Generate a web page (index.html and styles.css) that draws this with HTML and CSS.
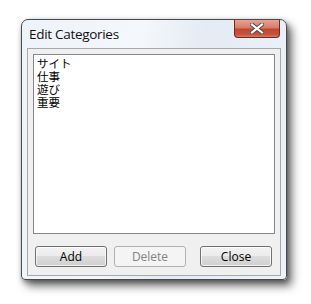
FILE: index.html
```html
<!DOCTYPE html>
<html>
<head>
<meta charset="utf-8">
<link rel="stylesheet" href="styles.css">
</head>
<body>
<div class="window">
  <div class="titlebar">
    <span class="title">Edit Categories</span>
    <div class="close-btn">
      <svg width="14" height="11" viewBox="0 0 14 11">
        <path d="M2 1.5 L12 9.5 M12 1.5 L2 9.5" stroke="#4a4a4a" stroke-width="4" stroke-linecap="square"/>
        <path d="M2 1.5 L12 9.5 M12 1.5 L2 9.5" stroke="#ffffff" stroke-width="2.2" stroke-linecap="square"/>
      </svg>
    </div>
  </div>
  <div class="client">
    <div class="listbox">
      <div class="item">サイト</div>
      <div class="item">仕事</div>
      <div class="item">遊び</div>
      <div class="item">重要</div>
    </div>
    <div class="buttons">
      <button class="btn">Add</button>
      <button class="btn disabled">Delete</button>
      <button class="btn close">Close</button>
    </div>
  </div>
</div>
</body>
</html>
```
FILE: styles.css
```css
html, body {
  margin: 0;
  padding: 0;
  background: #ffffff;
  width: 311px;
  height: 304px;
  overflow: hidden;
}
.window {
  margin-left: 21px;
  margin-top: 19px;
  width: 254px;
  height: 256px;
  border: 1px solid #474a4e;
  border-radius: 7px 7px 4px 4px;
  background: linear-gradient(100deg, #eef3f9 0%, #f4f7fb 40%, #e4ebf3 60%, #eef3f9 100%);
  box-shadow: 5px 6px 10px rgba(0,0,0,0.55), 1px 2px 5px rgba(0,0,0,0.35);
  display: flex;
  flex-direction: column;
  padding: 0 5px 3px 5px;
  box-sizing: content-box;
}
.titlebar {
  height: 28px;
  display: flex;
  align-items: flex-start;
  justify-content: space-between;
  flex: none;
}
.title {
  font-family: "Open Sans", sans-serif;
  font-size: 13.5px;
  color: #101010;
  margin-top: 5px;
  margin-left: 2px;
  letter-spacing: -0.3px;
}
.close-btn {
  width: 44px;
  height: 17px;
  margin-right: 1px;
  border: 1px solid #6b2a23;
  border-top: none;
  border-radius: 0 0 4px 4px;
  background: linear-gradient(#e8a593 0%, #d77c67 45%, #c3452e 55%, #c9533b 85%, #d97a60 100%);
  display: flex;
  align-items: center;
  justify-content: center;
}
.client {
  flex: 1;
  border: 1px solid #a5a9ae;
  background: #f0f0f0;
  padding: 5px;
  display: flex;
  flex-direction: column;
}
.listbox {
  height: 180px;
  box-sizing: border-box;
  border: 1px solid #828790;
  background: #ffffff;
  padding: 2px 3px;
  flex: none;
}
.item {
  font-family: "Noto Sans CJK JP", sans-serif;
  font-size: 11.5px;
  line-height: 13px;
  color: #000000;
}
.buttons {
  display: flex;
  margin-top: 12px;
  padding-left: 2px;
}
.btn {
  width: 72px;
  height: 21px;
  box-sizing: border-box;
  border: 1px solid #707070;
  border-radius: 3px;
  background: linear-gradient(#f2f2f2 0%, #ebebeb 50%, #dddddd 50%, #cfcfcf 100%);
  box-shadow: inset 0 0 0 1px rgba(255,255,255,0.7);
  font-family: "Open Sans", sans-serif;
  font-size: 12px;
  color: #000000;
  padding: 0;
  line-height: 17px;
}
.btn.disabled {
  margin-left: 7px;
  border-color: #adb2b5;
  background: #f4f4f4;
  box-shadow: none;
  color: #838383;
}
.btn.close {
  margin-left: 14px;
}
```
